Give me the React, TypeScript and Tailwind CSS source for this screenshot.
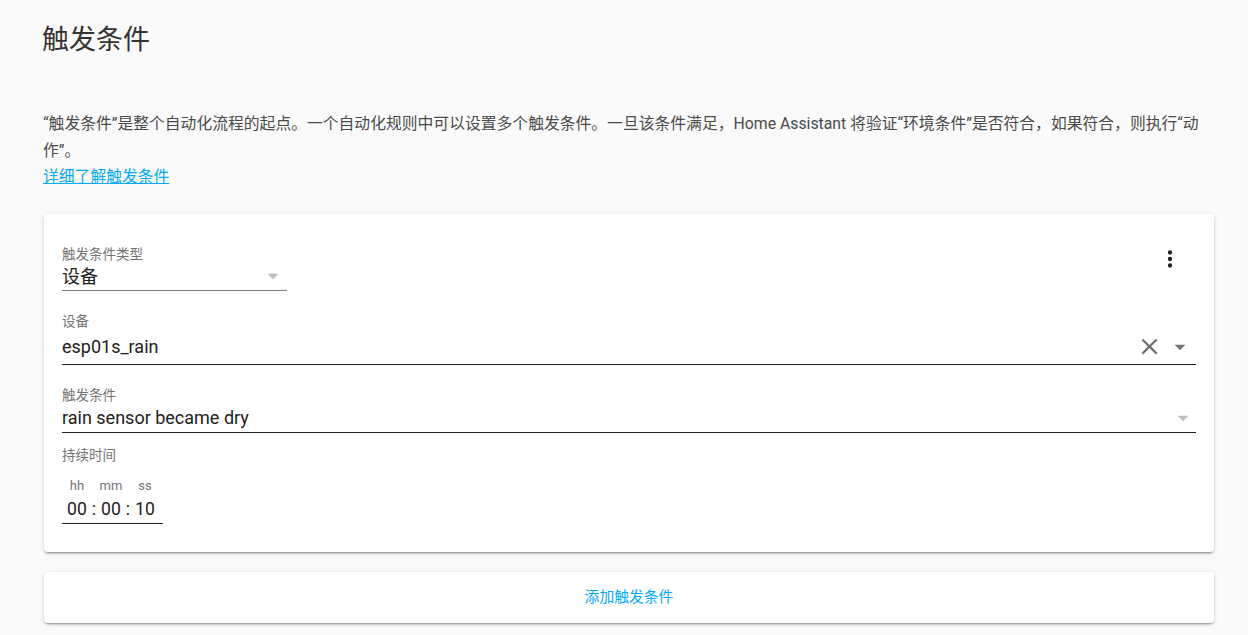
const font = { fontFamily: 'Roboto, "Noto Sans CJK SC", sans-serif' };

function MenuDown({ className }: { className: string }) {
  return (
    <svg viewBox="0 0 24 24" className={className} fill="currentColor">
      <path d="M7,10L12,15L17,10H7Z" />
    </svg>
  );
}

function DotsVertical() {
  return (
    <svg viewBox="0 0 24 24" className="h-[26px] w-[26px] text-[#212121]" fill="currentColor">
      <path d="M12,16A2,2 0 0,1 14,18A2,2 0 0,1 12,20A2,2 0 0,1 10,18A2,2 0 0,1 12,16M12,10A2,2 0 0,1 14,12A2,2 0 0,1 12,14A2,2 0 0,1 10,12A2,2 0 0,1 12,10M12,4A2,2 0 0,1 14,6A2,2 0 0,1 12,8A2,2 0 0,1 10,6A2,2 0 0,1 12,4Z" />
    </svg>
  );
}

function CloseIcon() {
  return (
    <svg viewBox="0 0 24 24" className="h-[27px] w-[27px] text-[#6f6f6f]" fill="currentColor">
      <path d="M19,6.41L17.59,5L12,10.59L6.41,5L5,6.41L10.59,12L5,17.59L6.41,19L12,13.41L17.59,19L19,17.59L13.41,12L19,6.41Z" />
    </svg>
  );
}

const cardShadow =
  "shadow-[0_2px_2px_0_rgba(0,0,0,0.14),0_1px_5px_0_rgba(0,0,0,0.12),0_3px_1px_-2px_rgba(0,0,0,0.2)]";

function TimeCol({ label, value }: { label: string; value: string }) {
  return (
    <div className="flex w-[22px] flex-col items-center">
      <span className="h-[16px] text-[13px] leading-[16px] text-[#757575]">{label}</span>
      <span className="mt-[3px] h-[24px] text-[17.6px] leading-[24px] text-[#212121]">{value}</span>
    </div>
  );
}

function Colon() {
  return (
    <div className="flex w-[12px] flex-col items-center">
      <span className="h-[16px]" />
      <span className="mt-[3px] h-[24px] text-[17.6px] leading-[24px] text-[#212121]">:</span>
    </div>
  );
}

export default function App() {
  return (
    <div className="min-h-screen bg-[#fafafa] pl-[44px] pr-[34px]" style={font}>
      <h1 className="-ml-[2px] pt-[20px] text-[27px] leading-[40px] font-normal text-[#333]">触发条件</h1>

      <div className="mt-[51px] text-[15.8px] leading-[26.5px] text-[#4a4a4a]">
        <p className="-ml-px">
          “触发条件”是整个自动化流程的起点。一个自动化规则中可以设置多个触发条件。一旦该条件满足，Home Assistant 将验证“环境条件”是否符合，如果符合，则执行“动作”。
        </p>
        <a href="#" className="-ml-px text-[#03a9f4] underline">
          详细了解触发条件
        </a>
      </div>

      <div className={`mt-[23px] rounded-[4px] bg-white px-[18px] pt-[32px] pb-[28px] ${cardShadow}`}>
        <div className="flex items-start justify-between">
          <div className="w-[225px]">
            <div className="h-[16px] text-[13.5px] leading-[16px] text-[#737373]">触发条件类型</div>
            <div className="mt-px flex h-[28px] items-center justify-between border-b border-[#7a7a7a]">
              <span className="text-[18px] text-[#212121]">设备</span>
              <MenuDown className="mr-[1px] h-[26px] w-[26px] text-[#bdbdbd]" />
            </div>
          </div>
          <div className="flex h-[26px] w-[53px] items-center justify-center">
            <DotsVertical />
          </div>
        </div>

        <div className="mt-[22px]">
          <div className="h-[16px] text-[13.5px] leading-[16px] text-[#737373]">设备</div>
          <div className="mt-px flex h-[35px] items-center justify-between border-b border-[#212121]">
            <span className="text-[18px] text-[#212121]">esp01s_rain</span>
            <div className="flex items-center gap-[4px]">
              <CloseIcon />
              <MenuDown className="mr-[3px] h-[26px] w-[26px] text-[#757575]" />
            </div>
          </div>
        </div>

        <div className="mt-[22px]">
          <div className="h-[16px] text-[13.5px] leading-[16px] text-[#737373]">触发条件</div>
          <div className="mt-px flex h-[29px] items-center justify-between border-b border-[#212121]">
            <span className="text-[18px] text-[#212121]">rain sensor became dry</span>
            <MenuDown className="h-[26px] w-[26px] text-[#bdbdbd]" />
          </div>
        </div>

        <div className="mt-[14px]">
          <div className="h-[16px] text-[13.5px] leading-[16px] text-[#737373]">持续时间</div>
          <div className="mt-[15px] inline-flex border-b border-[#212121] pr-[7px] pl-[4px] pb-[2px]">
            <TimeCol label="hh" value="00" />
            <Colon />
            <TimeCol label="mm" value="00" />
            <Colon />
            <TimeCol label="ss" value="10" />
          </div>
        </div>
      </div>

      <div className={`mt-[20px] flex h-[51px] items-center justify-center rounded-[4px] bg-white ${cardShadow}`}>
        <span className="text-[14.8px] text-[#03a9f4]">添加触发条件</span>
      </div>
    </div>
  );
}
